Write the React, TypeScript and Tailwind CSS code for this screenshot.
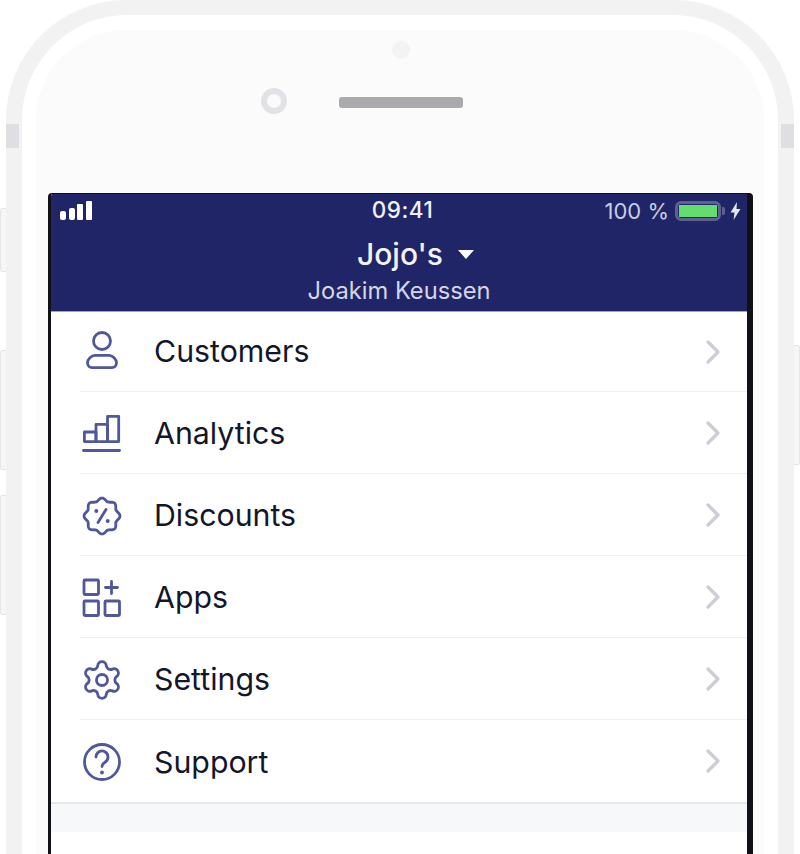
import { ChevronRight, Settings } from 'lucide-react';
import type { ReactNode } from 'react';

// wavy outline of the discount badge
const badgePoints = Array.from({ length: 96 }, (_, i) => {
  const angle = (i / 96) * Math.PI * 2;
  const r = 16.6 + 1.4 * Math.cos(8 * angle);
  return `${(22 + r * Math.sin(angle)).toFixed(2)},${(22 - r * Math.cos(angle)).toFixed(2)}`;
}).join(' ');

function CustomersIcon() {
  return (
    <svg width="44" height="44" viewBox="0 0 44 44" fill="none" stroke="currentColor" strokeWidth="2.8">
      <circle cx="22" cy="11" r="8.5" />
      <path d="M15 25.400h14c3.500 0 7.500 3.600 7.500 7.400 0 2.800-2 4.800-4.500 4.800H12c-2.500 0-4.500-2-4.500-4.800 0-3.800 4-7.400 7.500-7.400z" />
    </svg>
  );
}

function AnalyticsIcon() {
  return (
    <svg width="44" height="44" viewBox="0 0 44 44" fill="none" stroke="currentColor" strokeWidth="2.8" strokeLinejoin="round">
      <path d="M4.400 29.600V20H16v9.600z" />
      <path d="M16 29.600V12.400h11.500v17.200z" />
      <path d="M27.500 29.600V4.400h11.200v25.200z" />
      <path d="M3.500 38.500h36" strokeLinecap="round" />
    </svg>
  );
}

function DiscountsIcon() {
  return (
    <svg width="44" height="44" viewBox="0 0 44 44" fill="none" stroke="currentColor" strokeWidth="2.8" strokeLinejoin="round">
      <polygon points={badgePoints} />
      <path d="M26 15.500 18 28.500" strokeLinecap="round" />
      <circle cx="16.300" cy="17" r="2" fill="currentColor" stroke="none" />
      <circle cx="27.700" cy="27" r="2" fill="currentColor" stroke="none" />
    </svg>
  );
}

function AppsIcon() {
  return (
    <svg width="44" height="44" viewBox="0 0 44 44" fill="none" stroke="currentColor" strokeWidth="2.8" strokeLinejoin="round">
      <rect x="4" y="4" width="14.500" height="14.500" rx="1" />
      <rect x="4" y="25" width="14.500" height="14.500" rx="1" />
      <rect x="25" y="25" width="14.500" height="14.500" rx="1" />
      <path d="M31.500 5.500v12M25.500 11.500h12" strokeLinecap="round" />
    </svg>
  );
}

function SupportIcon() {
  return (
    <svg width="44" height="44" viewBox="0 0 44 44" fill="none" stroke="currentColor" strokeWidth="2.8" strokeLinecap="round">
      <circle cx="22" cy="22" r="17.500" />
      <path d="M16 17a6 6 0 1 1 9 5.200c-2 1.200-3 2-3 4.300" />
      <circle cx="22" cy="32.500" r="1.900" fill="currentColor" stroke="none" />
    </svg>
  );
}

function StatusBar() {
  return (
    <div className="grid grid-cols-[1fr_auto_1fr] items-center h-[33px] pl-[9px] pr-[6px]">
      <div className="flex items-end gap-[2.5px] h-[19px]">
        <span className="w-[6px] h-[9px] rounded-[2px] bg-white" />
        <span className="w-[6px] h-[12px] rounded-[2px] bg-white" />
        <span className="w-[6px] h-[16px] rounded-[1px] bg-white" />
        <span className="w-[6px] h-[19px] rounded-[1px] bg-white" />
      </div>
      <span className="ml-[4px] text-[22.5px] leading-none font-medium text-[#f0f0f5] tracking-[0.5px]">09:41</span>
      <div className="flex items-center justify-end">
        <span className="text-[22px] leading-none text-[#c9cbe0] mr-[6px]">100 %</span>
        <div className="w-[46px] h-[20px] rounded-[6px] border-[3px] border-[#5d6190] p-px">
          <div className="h-full w-full bg-[#63dd70]" />
        </div>
        <span className="w-[3px] h-[8px] rounded-r-[2px] bg-[#5d6190] ml-px" />
        <svg width="11" height="18" viewBox="0 0 11 18" className="ml-[5px]" fill="#e6e7f0">
          <path d="M7 0 0.500 10.500h4L3.500 18l7-11H6.500z" />
        </svg>
      </div>
    </div>
  );
}

function Row({ icon, label, first, last }: { icon: ReactNode; label: string; first?: boolean; last?: boolean }) {
  return (
    <div className={first ? 'h-[80px] pl-[29px]' : 'h-[82px] pl-[29px]'}>
      <div className={last ? 'flex items-center h-full pr-[14px]' : 'flex items-center h-full pr-[14px] border-b border-[#f0f0f2]'}>
        <div className={first ? 'w-[44px] h-[44px] text-[#50579a]' : 'w-[44px] h-[44px] mt-[2px] text-[#50579a]'}>{icon}</div>
        <span className={first ? 'ml-[30px] flex-1 text-[30.3px] leading-none text-[#14162a]' : 'ml-[30px] mt-[2px] flex-1 text-[30.3px] leading-none text-[#14162a]'}>{label}</span>
        <ChevronRight size={40} strokeWidth={2} className="text-[#cccdd6]" />
      </div>
    </div>
  );
}

export default function App() {
  return (
    <div className="relative w-[800px] h-[854px] overflow-hidden bg-white font-['Inter',sans-serif]">
      {/* side buttons */}
      <div className="absolute left-0 top-[208px] w-[7px] h-[64px] rounded-l-[2px] border border-[#e6e6e9] bg-[#f6f6f7]" />
      <div className="absolute left-0 top-[350px] w-[7px] h-[120px] rounded-l-[2px] border border-[#e6e6e9] bg-[#f6f6f7]" />
      <div className="absolute left-0 top-[495px] w-[7px] h-[120px] rounded-l-[2px] border border-[#e6e6e9] bg-[#f6f6f7]" />
      <div className="absolute right-0 top-[345px] w-[7px] h-[120px] rounded-r-[2px] border border-[#e6e6e9] bg-[#f6f6f7]" />

      {/* phone body */}
      <div className="relative ml-[6px] w-[788px] h-[1200px] rounded-[120px] bg-[#f2f2f3] px-[16px] pt-[15px]">
        <div className="absolute left-0 top-[124px] w-[13px] h-[24px] bg-[#dfdfe3]" />
        <div className="absolute right-0 top-[124px] w-[13px] h-[24px] bg-[#dfdfe3]" />
        <div className="h-[1170px] rounded-[105px] bg-white px-[14px] pt-[15px]">
          <div className="relative h-[1140px] rounded-[90px] bg-[#fbfbfb] pl-[12px] pr-[11px] pt-[163px]">
            <div className="absolute left-[356px] top-[11px] w-[18px] h-[18px] rounded-full bg-[#f3f3f4]" />
            <div className="absolute left-[225px] top-[58px] w-[26px] h-[26px] rounded-full bg-[#e2e2e6] p-[6px]">
              <div className="w-full h-full rounded-full bg-[#fafafb]" />
            </div>
            <div className="absolute left-[303px] top-[67px] w-[124px] h-[11px] rounded-[3px] bg-[#a9a9ae]" />

            {/* screen */}
            <div className="rounded-t-[4px] border-l-[3px] border-r-[6px] border-t border-[#111218] bg-white overflow-hidden">
              <div className="h-[118px] bg-[#1f2566] border-b border-[#9fa2c0]">
                <StatusBar />
                <div className="flex items-center justify-center h-[42px] mt-[6px] pl-[33px]">
                  <span className="text-[30px] leading-none font-medium text-[#f2f2f7]">Jojo's</span>
                  <span className="ml-[15px] w-0 h-0 border-x-[8.500px] border-x-transparent border-t-[9px] border-t-white" />
                </div>
                <div className="text-center text-[23.7px] leading-none text-[#d5d6e6] mt-[4px]">Joakim Keussen</div>
              </div>
              <Row first icon={<CustomersIcon />} label="Customers" />
              <Row icon={<AnalyticsIcon />} label="Analytics" />
              <Row icon={<DiscountsIcon />} label="Discounts" />
              <Row icon={<AppsIcon />} label="Apps" />
              <Row icon={<Settings size={44} strokeWidth={1.55} />} label="Settings" />
              <Row last icon={<SupportIcon />} label="Support" />
              <div className="h-[30px] border-t-2 border-[#e6e7ea] bg-[#f7f8fa]" />
              <div className="h-[60px] bg-white" />
            </div>
          </div>
        </div>
      </div>
    </div>
  );
}
